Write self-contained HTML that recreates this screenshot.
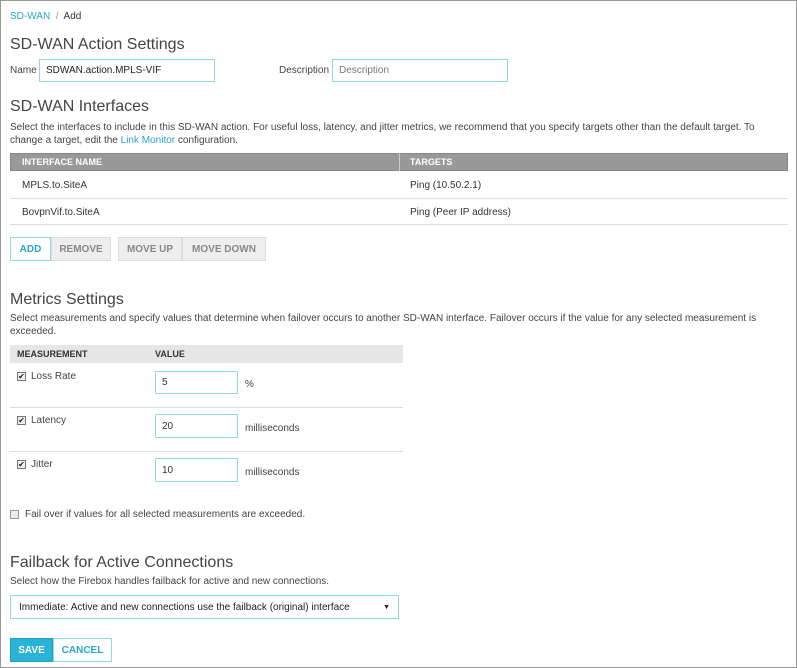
<!DOCTYPE html><html><head><style>
*{box-sizing:border-box;margin:0;padding:0}
body{width:797px;height:668px;background:#fff;font-family:"Liberation Sans",sans-serif;color:#333;position:relative;overflow:hidden}
.frame{position:absolute;left:0;top:0;width:797px;height:668px;border:1px solid #999}
.a{position:absolute;white-space:nowrap}
.h{font-size:16px;color:#444}
.s{font-size:10px;color:#444}
.in{position:absolute;border:1px solid #8fd6e6;background:#fff;font-size:10px;padding-left:6px;display:flex;align-items:center}
.btn{position:absolute;border:1px solid #ddd;background:#eee;color:#888;font-size:10px;font-weight:bold;display:flex;align-items:center;justify-content:center}
.cb{position:absolute;width:9px;height:9px;border:1px solid #777;background:#eee;font-size:8px;line-height:7px;text-align:center;color:#222}
.line{position:absolute;height:1px;background:#ddd}
</style></head><body>
<div class="frame"></div>
<div class="a" style="left:10px;top:11px;font-size:10px"><span style="color:#2aa6c6">SD-WAN</span> <span style="color:#999">&nbsp;/&nbsp;</span> Add</div>
<div class="a h" style="left:10px;top:36px">SD-WAN Action Settings</div>
<div class="a s" style="left:10px;top:65px">Name</div>
<div class="in" style="left:39px;top:59px;width:176px;height:23px;color:#222">SDWAN.action.MPLS-VIF</div>
<div class="a s" style="left:279px;top:65px">Description</div>
<div class="in" style="left:332px;top:59px;width:176px;height:23px;color:#777">Description</div>
<div class="a h" style="left:10px;top:98px">SD-WAN Interfaces</div>
<div class="a s" style="left:10px;top:122px">Select the interfaces to include in this SD-WAN action. For useful loss, latency, and jitter metrics, we recommend that you specify targets other than the default target. To</div>
<div class="a s" style="left:10px;top:135px">change a target, edit the <span style="color:#2aa6c6">Link Monitor</span> configuration.</div>
<div class="a" style="left:10px;top:153px;width:778px;height:18px;background:#999;border:1px solid #888"></div>
<div class="a" style="left:399px;top:153px;width:1px;height:18px;background:#ccc"></div>
<div class="a" style="left:22px;top:157px;font-size:9px;font-weight:bold;color:#fff">INTERFACE NAME</div>
<div class="a" style="left:410px;top:157px;font-size:9px;font-weight:bold;color:#fff">TARGETS</div>
<div class="a s" style="left:22px;top:180px;color:#333">MPLS.to.SiteA</div>
<div class="a s" style="left:410px;top:180px;color:#333">Ping (10.50.2.1)</div>
<div class="line" style="left:10px;top:198px;width:778px"></div>
<div class="a s" style="left:22px;top:207px;color:#333">BovpnVif.to.SiteA</div>
<div class="a s" style="left:410px;top:207px;color:#333">Ping (Peer IP address)</div>
<div class="line" style="left:10px;top:224px;width:778px"></div>
<div class="btn" style="left:10px;top:237px;width:41px;height:24px;background:#fff;border-color:#8fd6e6;color:#2aa6c6">ADD</div>
<div class="btn" style="left:51px;top:237px;width:60px;height:24px">REMOVE</div>
<div class="btn" style="left:118px;top:237px;width:64px;height:24px">MOVE UP</div>
<div class="btn" style="left:182px;top:237px;width:84px;height:24px">MOVE DOWN</div>
<div class="a h" style="left:10px;top:291px">Metrics Settings</div>
<div class="a s" style="left:10px;top:313px">Select measurements and specify values that determine when failover occurs to another SD-WAN interface. Failover occurs if the value for any selected measurement is</div>
<div class="a s" style="left:10px;top:326px">exceeded.</div>
<div class="a" style="left:10px;top:345px;width:393px;height:18px;background:#e6e6e6"></div>
<div class="a" style="left:17px;top:349px;font-size:9px;font-weight:bold;color:#333">MEASUREMENT</div>
<div class="a" style="left:155px;top:349px;font-size:9px;font-weight:bold;color:#333">VALUE</div>
<div class="cb" style="left:17px;top:372px">✔</div><div class="a s" style="left:31px;top:371px">Loss Rate</div>
<div class="in" style="left:155px;top:371px;width:83px;height:23px">5</div><div class="a s" style="left:245px;top:379px">%</div>
<div class="line" style="left:10px;top:407px;width:393px"></div>
<div class="cb" style="left:17px;top:416px">✔</div><div class="a s" style="left:31px;top:415px">Latency</div>
<div class="in" style="left:155px;top:414px;width:83px;height:24px">20</div><div class="a s" style="left:245px;top:423px">milliseconds</div>
<div class="line" style="left:10px;top:451px;width:393px"></div>
<div class="cb" style="left:17px;top:460px">✔</div><div class="a s" style="left:31px;top:459px">Jitter</div>
<div class="in" style="left:155px;top:458px;width:83px;height:24px">10</div><div class="a s" style="left:245px;top:467px">milliseconds</div>
<div class="cb" style="left:10px;top:510px;border-color:#999"></div><div class="a s" style="left:25px;top:509px">Fail over if values for all selected measurements are exceeded.</div>
<div class="a h" style="left:10px;top:554px">Failback for Active Connections</div>
<div class="a s" style="left:10px;top:576px">Select how the Firebox handles failback for active and new connections.</div>
<div class="in" style="left:10px;top:595px;width:389px;height:24px;padding-left:8px;color:#222">Immediate: Active and new connections use the failback (original) interface<span style="position:absolute;right:8px;font-size:7px">▼</span></div>
<div class="btn" style="left:10px;top:638px;width:43px;height:24px;background:#2ab3d4;border-color:#22a0c0;color:#fff">SAVE</div>
<div class="btn" style="left:53px;top:638px;width:59px;height:24px;background:#fff;border-color:#8fd6e6;color:#2aa6c6">CANCEL</div>
</body></html>
